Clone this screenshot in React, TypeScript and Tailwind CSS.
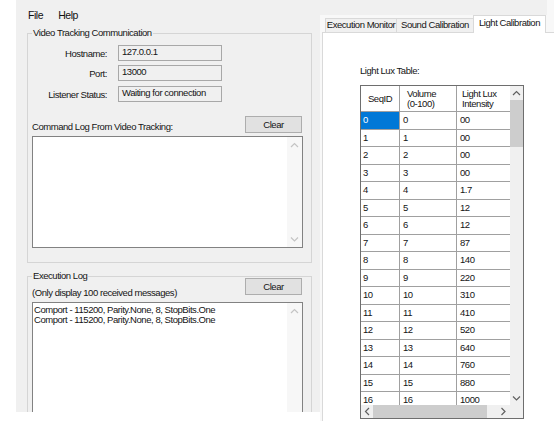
import React from "react";

const rows: [string, string, string][] = [
  ["0", "0", "00"],
  ["1", "1", "00"],
  ["2", "2", "00"],
  ["3", "3", "00"],
  ["4", "4", "1.7"],
  ["5", "5", "12"],
  ["6", "6", "12"],
  ["7", "7", "87"],
  ["8", "8", "140"],
  ["9", "9", "220"],
  ["10", "10", "310"],
  ["11", "11", "410"],
  ["12", "12", "520"],
  ["13", "13", "640"],
  ["14", "14", "760"],
  ["15", "15", "880"],
  ["16", "16", "1000"],
];

type Dir = "up" | "down" | "left" | "right";

function Chevron({ dir, color }: { dir: Dir; color: string }) {
  const pts: Record<Dir, string> = {
    up: "1,5 4.5,1.5 8,5",
    down: "1,1.5 4.5,5 8,1.5",
    left: "5,1 1.5,4.5 5,8",
    right: "1.5,1 5,4.5 1.5,8",
  };
  const vertical = dir === "up" || dir === "down";
  return (
    <svg
      width={vertical ? 9 : 7}
      height={vertical ? 7 : 9}
      viewBox={vertical ? "0 0 9 7" : "0 0 7 9"}
      fill="none"
    >
      <polyline points={pts[dir]} stroke={color} strokeWidth="1.2" />
    </svg>
  );
}

function LabeledBox({
  label,
  value,
  mt,
}: {
  label: string;
  value: string;
  mt: string;
}) {
  return (
    <div className={`flex items-start ${mt}`}>
      <div className="w-[79px] whitespace-nowrap pt-[2px] text-right leading-[14px]">{label}</div>
      <div className="ml-[11px] h-[16px] w-[104px] whitespace-nowrap border border-[#a8a8a8] pl-[3px] leading-[12px]">
        {value}
      </div>
    </div>
  );
}

function ClearButton() {
  return (
    <button className="ml-auto mr-[9px] h-[17px] w-[57px] shrink-0 border border-[#adadad] bg-[#e1e1e1] text-center leading-[14px]">
      Clear
    </button>
  );
}

export default function App() {
  return (
    <div className="flex h-[441px] w-[554px] overflow-hidden bg-white font-['Liberation_Sans',Arial,sans-serif] text-[9.5px] leading-[12px] tracking-[-0.45px] text-[#141414]">
      <div className="w-[16px] shrink-0" />

      {/* Left panel */}
      <div className="flex h-[412px] w-[304px] shrink-0 flex-col overflow-hidden bg-[#f0f0f0]">
        <div className="flex h-[27px] shrink-0 gap-[15px] pl-[12px] pt-[8px] text-[10.5px] leading-[14px] text-[#111]">
          <span>File</span>
          <span>Help</span>
        </div>

        <fieldset className="ml-[11px] h-[236px] w-[285px] shrink-0 border border-[#d5d5d5] p-0">
          <legend className="ml-[4px] whitespace-nowrap px-[1px] leading-[12px]">Video Tracking Communication</legend>
          <div className="flex flex-col">
            <LabeledBox label="Hostname:" value="127.0.0.1" mt="mt-[6px]" />
            <LabeledBox label="Port:" value="13000" mt="mt-[4px]" />
            <LabeledBox label="Listener Status:" value="Waiting for connection" mt="mt-[5px]" />

            <div className="mt-[14px] flex items-start">
              <div className="ml-[4px] whitespace-nowrap pt-[4px] leading-[14px]">Command Log From Video Tracking:</div>
              <ClearButton />
            </div>

            <div className="ml-[4px] mt-[2px] flex h-[112px] w-[271px] border border-[#828282] bg-white">
              <div className="flex-1" />
              <div className="flex w-[15px] flex-col justify-between bg-[#f7f7f7]">
                <div className="flex h-[16px] items-center justify-center">
                  <Chevron dir="up" color="#c4c4c4" />
                </div>
                <div className="flex h-[16px] items-center justify-center">
                  <Chevron dir="down" color="#c4c4c4" />
                </div>
              </div>
            </div>
          </div>
        </fieldset>

        <fieldset className="ml-[11px] mt-[7px] h-[160px] w-[285px] shrink-0 border border-[#d5d5d5] p-0">
          <legend className="ml-[4px] whitespace-nowrap px-[1px] leading-[12px]">Execution Log</legend>
          <div className="flex flex-col">
            <div className="mt-[-4px] flex items-start">
              <div className="ml-[4px] mt-[8px] whitespace-nowrap leading-[14px]">(Only display 100 received messages)</div>
              <ClearButton />
            </div>
            <div className="ml-[4px] mt-[2px] flex h-[150px] w-[271px] border border-[#828282] bg-white">
              <div className="flex-1 whitespace-nowrap pl-[1px] pt-[2px] leading-[10px]">
                <div>Comport - 115200, Parity.None, 8, StopBits.One</div>
                <div>Comport - 115200, Parity.None, 8, StopBits.One</div>
              </div>
              <div className="flex w-[15px] flex-col bg-[#f7f7f7]">
                <div className="flex h-[16px] items-center justify-center">
                  <Chevron dir="up" color="#c4c4c4" />
                </div>
              </div>
            </div>
          </div>
        </fieldset>
      </div>

      {/* Right side: tab control */}
      <div className="flex h-[421px] w-[234px] shrink-0 flex-col bg-[#f8f8f8]">
        <div className="h-[15px] w-[227px] shrink-0 bg-[#f0f0f0]" />
        <div className="flex h-[17px] shrink-0 items-end pl-[5px]">
          <div className="flex h-[14px] w-[72px] justify-center whitespace-nowrap border border-b-0 border-[#d9d9d9] bg-[#f0f0f0] leading-[12px]">
            Execution Monitor
          </div>
          <div className="flex h-[14px] w-[76px] justify-center whitespace-nowrap border border-b-0 border-l-0 border-r-0 border-[#d9d9d9] bg-[#f0f0f0] leading-[12px]">
            Sound Calibration
          </div>
          <div className="relative z-10 mb-[-1px] flex h-[18px] w-[73px] justify-center whitespace-nowrap border border-b-0 border-[#d9d9d9] bg-white pt-[1px] leading-[12px]">
            Light Calibration
          </div>
        </div>

        <div className="ml-[2px] flex-1 border-l border-t border-[#d9d9d9] bg-white pl-[37px]">
          <div className="mt-[32px] leading-[12px]">Light Lux Table:</div>

          <div className="mt-[8px] flex h-[334px] w-[164px] border border-[#6e6e6e] bg-white">
            <div className="flex w-[149px] flex-col">
              <div className="flex-1 overflow-hidden">
                <div className="w-[156px]">
                  <div className="flex h-[26px] border-b border-[#a0a0a0]">
                    <div className="flex w-[39px] items-center justify-center border-r border-[#a0a0a0]">
                      SeqID
                    </div>
                    <div className="flex w-[57px] flex-col justify-center border-r border-[#a0a0a0] pl-[7px] leading-[9.5px]">
                      <span>Volume</span>
                      <span>(0-100)</span>
                    </div>
                    <div className="flex w-[60px] flex-col justify-center pl-[5px] leading-[9.5px]">
                      <span>Light Lux</span>
                      <span>Intensity</span>
                    </div>
                  </div>
                  {rows.map((r, i) => (
                    <div key={i} className="flex h-[17.5px] border-b border-[#a0a0a0]">
                      <div
                        className={
                          i === 0
                            ? "flex w-[39px] items-center border-r border-[#a0a0a0] bg-[#0078d7] pl-[2px] text-white"
                            : "flex w-[39px] items-center border-r border-[#a0a0a0] pl-[2px]"
                        }
                      >
                        {r[0]}
                      </div>
                      <div className="flex w-[57px] items-center border-r border-[#a0a0a0] pl-[3px]">
                        {r[1]}
                      </div>
                      <div className="flex w-[60px] items-center pl-[3px]">{r[2]}</div>
                    </div>
                  ))}
                </div>
              </div>
              <div className="flex h-[13px] shrink-0 bg-[#f0f0f0]">
                <div className="flex w-[12px] items-center justify-center">
                  <Chevron dir="left" color="#606060" />
                </div>
                <div className="w-[114px] bg-[#cdcdcd]" />
                <div className="flex-1" />
                <div className="flex w-[13px] items-center justify-center">
                  <Chevron dir="right" color="#606060" />
                </div>
              </div>
            </div>
            <div className="flex w-[13px] flex-col bg-[#f0f0f0]">
              <div className="flex h-[14px] items-center justify-center">
                <Chevron dir="up" color="#606060" />
              </div>
              <div className="h-[47px] bg-[#cdcdcd]" />
              <div className="flex-1" />
              <div className="flex h-[13px] items-center justify-center">
                <Chevron dir="down" color="#606060" />
              </div>
              <div className="h-[13px] bg-[#f0f0f0]" />
            </div>
          </div>
        </div>
      </div>
    </div>
  );
}
